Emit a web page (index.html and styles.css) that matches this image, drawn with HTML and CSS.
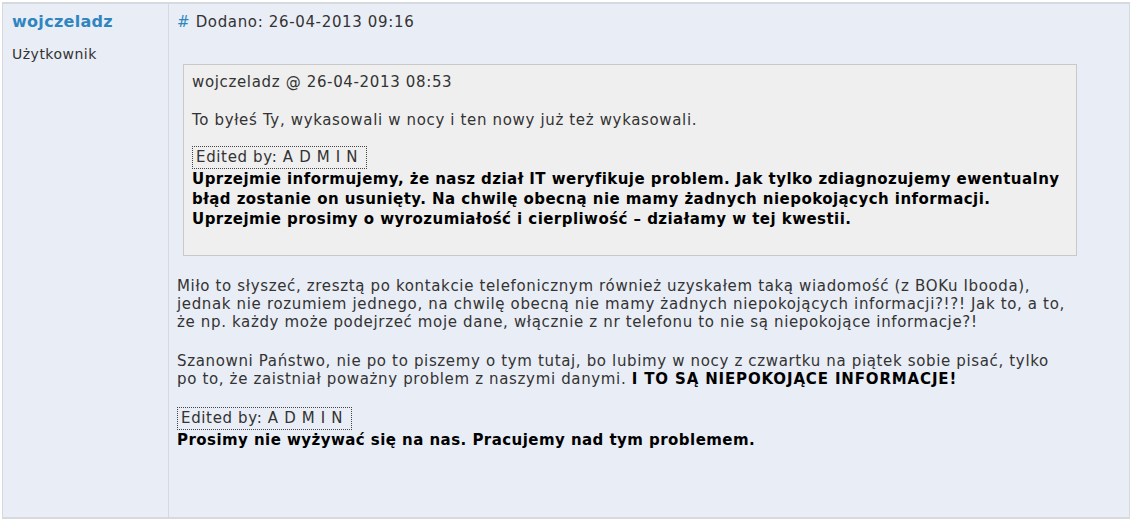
FILE: index.html
```html
<!DOCTYPE html>
<html lang="pl">
<head>
    <meta charset="UTF-8">
    <title>Forum - post</title>
    <link rel="stylesheet" href="styles.css">
</head>
<body>
    <div class="post">
        <div class="author">
            <div class="author-name">wojczeladz</div>
            <div class="author-rank">Użytkownik</div>
        </div>
        <div class="post-body">
            <div class="post-date"><a href="#" class="anchor">#</a> Dodano: 26-04-2013 09:16</div>

            <div class="quote">
                <div class="quote-head">wojczeladz @ 26-04-2013 08:53</div>
                <p>To byłeś Ty, wykasowali w nocy i ten nowy już też wykasowali.</p>
                <div class="edited">Edited by: A D M I N</div>
                <div class="admin-note">Uprzejmie informujemy, że nasz dział IT weryfikuje problem. Jak tylko zdiagnozujemy ewentualny błąd zostanie on usunięty. Na chwilę obecną nie mamy żadnych niepokojących informacji.<br>Uprzejmie prosimy o wyrozumiałość i cierpliwość – działamy w tej kwestii.</div>
            </div>

            <p class="first">Miło to słyszeć, zresztą po kontakcie telefonicznym również uzyskałem taką wiadomość (z BOKu Ibooda), jednak nie rozumiem jednego, na chwilę obecną nie mamy żadnych niepokojących informacji?!?! Jak to, a to, że np. każdy może podejrzeć moje dane, włącznie z nr telefonu to nie są niepokojące informacje?!</p>
            <p class="last">Szanowni Państwo, nie po to piszemy o tym tutaj, bo lubimy w nocy z czwartku na piątek sobie pisać, tylko po to, że zaistniał poważny problem z naszymi danymi. <b>I TO SĄ NIEPOKOJĄCE INFORMACJE!</b></p>
            <div class="edited">Edited by: A D M I N</div>
            <div class="admin-note">Prosimy nie wyżywać się na nas. Pracujemy nad tym problemem.</div>
        </div>
    </div>
</body>
</html>
```

FILE: styles.css
```css
/* Base */
body {
    margin: 0;
    padding: 2px 1px 0 2px;
    background-color: #ffffff;
    font-family: 'DejaVu Sans', Verdana, sans-serif;
    font-size: 15px;
    letter-spacing: 0.65px;
    color: #333;
}

/* Post row */
.post {
    display: flex;
    box-sizing: border-box;
    height: 517px;
    background-color: #e9edf5;
    border: 1px solid #d6d9de;
    border-top-width: 2px;
    border-bottom-width: 2px;
}

.author {
    box-sizing: border-box;
    width: 166px;
    padding: 8px 0 0 9px;
    border-right: 1px solid #d6d9de;
    flex-shrink: 0;
}

.author-name {
    color: #2f86bf;
    font-weight: bold;
    font-size: 16px;
    letter-spacing: 0.3px;
    line-height: 20px;
}

.author-rank {
    margin-top: 13px;
    font-size: 14px;
    letter-spacing: 0.5px;
    line-height: 18px;
}

.post-body {
    flex: 1;
    padding: 8px 60px 0 8px;
    line-height: 18px;
}

.post-date {
    line-height: 20px;
}

.anchor {
    color: #2f86bf;
    text-decoration: none;
}

/* Quote */
.quote {
    margin: 32px -8px 0 6px;
    padding: 8px 8px 26px 8px;
    background-color: #efefef;
    border: 1px solid #c9c9c9;
}

.quote p {
    margin: 20px 0 17px;
}

p {
    margin: 0 0 21px;
}

p.first {
    margin-top: 21px;
}

p.last {
    margin-bottom: 19px;
}

.edited {
    display: table;
    border: 1px dotted #444;
    padding: 1px 8px 2px 3px;
    line-height: 18px;
}

.admin-note {
    color: #000;
    font-weight: bold;
    letter-spacing: 0.45px;
    line-height: 20px;
}

b {
    color: #000;
    letter-spacing: 0.85px;
}
```
